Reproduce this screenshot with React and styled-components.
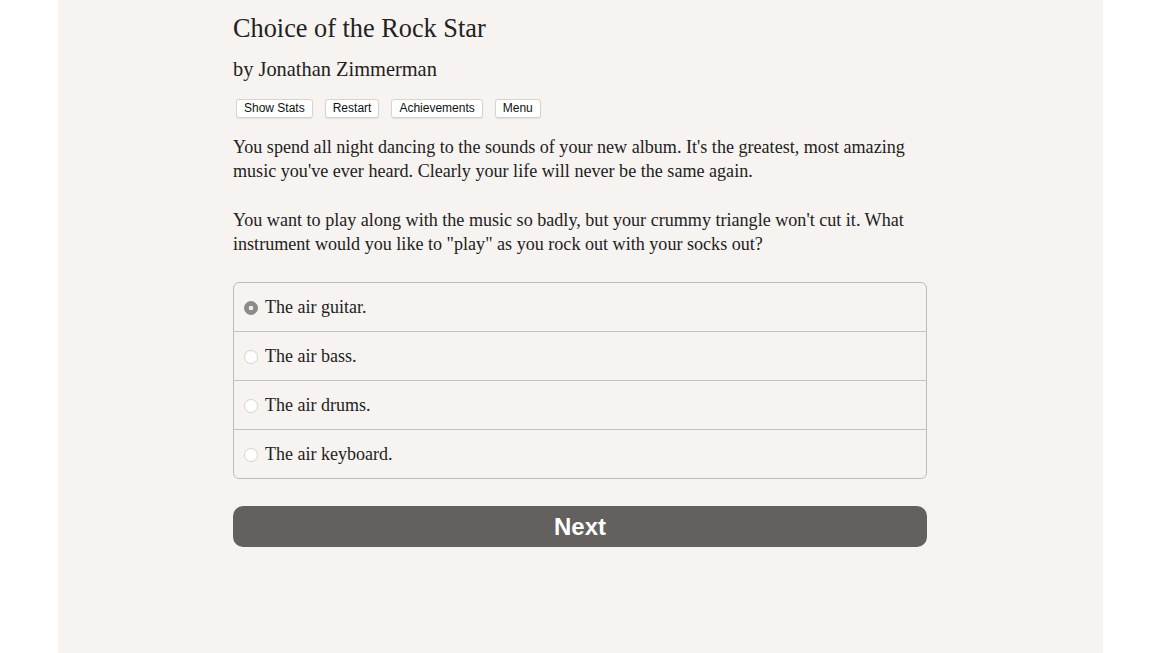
import React, { useState } from "react";
import styled, { createGlobalStyle } from "styled-components";

const GlobalStyle = createGlobalStyle`
  html, body {
    margin: 0;
    padding: 0;
    background: #ffffff;
  }
  #root {
    min-height: 100vh;
  }
`;

const choices = [
  "The air guitar.",
  "The air bass.",
  "The air drums.",
  "The air keyboard.",
];

const App = () => {
  const [selected, setSelected] = useState(0);

  return (
    <>
      <GlobalStyle />
      <Page>
        <Column>
          <Title>Choice of the Rock Star</Title>
          <Author>by Jonathan Zimmerman</Author>
          <Toolbar>
            <SmallButton>Show Stats</SmallButton>
            <SmallButton>Restart</SmallButton>
            <SmallButton>Achievements</SmallButton>
            <SmallButton>Menu</SmallButton>
          </Toolbar>
          <Text>
            You spend all night dancing to the sounds of your new album. It's the
            greatest, most amazing music you've ever heard. Clearly your life will
            never be the same again.
          </Text>
          <Text>
            You want to play along with the music so badly, but your crummy
            triangle won't cut it. What instrument would you like to "play" as you
            rock out with your socks out?
          </Text>
          <ChoiceList>
            {choices.map((c, i) => (
              <ChoiceRow key={c} onClick={() => setSelected(i)}>
                <Radio $checked={selected === i} />
                <span>{c}</span>
              </ChoiceRow>
            ))}
          </ChoiceList>
          <NextButton>Next</NextButton>
        </Column>
      </Page>
    </>
  );
};

export default App;

const Page = styled.div`
  width: 1045px;
  min-height: 100vh;
  margin: 0 auto;
  background: #f7f3f0;
  display: flex;
  justify-content: center;
  font-family: "Liberation Serif", "DejaVu Serif", serif;
  color: #222;
`;

const Column = styled.div`
  width: 694px;
  padding-top: 13px;
  display: flex;
  flex-direction: column;
`;

const Title = styled.h1`
  margin: 0;
  font-size: 26.3px;
  font-weight: normal;
  line-height: 32px;
`;

const Author = styled.h2`
  margin: 12px 0 0;
  font-size: 20.4px;
  font-weight: normal;
  line-height: 24px;
`;

const Toolbar = styled.div`
  display: flex;
  gap: 12px;
  margin: 18px 0 0 3px;
`;

const SmallButton = styled.button`
  font-family: "Liberation Sans", Arial, sans-serif;
  font-size: 12px;
  color: #111;
  background: #fff;
  border: 1px solid #d6d3d0;
  border-radius: 3px;
  height: 19px;
  padding: 0 7px;
  line-height: 17px;
  box-shadow: 0 1px 1px rgba(0, 0, 0, 0.08);
`;

const Text = styled.p`
  margin: 17px 0 8px;
  font-size: 18.1px;
  line-height: 24px;
`;

const ChoiceList = styled.div`
  margin-top: 18px;
  border: 1px solid #bdbab7;
  border-radius: 6px;
  overflow: hidden;
`;

const ChoiceRow = styled.label`
  display: flex;
  align-items: center;
  gap: 7px;
  height: 48px;
  padding: 0 0 0 10px;
  font-size: 18px;
  cursor: pointer;
  & + & {
    border-top: 1px solid #c4c1be;
  }
`;

const Radio = styled.span`
  width: 14px;
  height: 14px;
  border-radius: 50%;
  box-sizing: border-box;
  margin-top: 1px;
  border: 1px solid ${(p) => (p.$checked ? "#8a8785" : "#d4d1ce")};
  background: ${(p) =>
    p.$checked
      ? "radial-gradient(circle, #f0eeec 0 2px, #8d8a88 2.6px)"
      : "#fff"};
`;

const NextButton = styled.button`
  margin-top: 27px;
  height: 41px;
  border: none;
  border-radius: 10px;
  background: #63605d;
  color: #fff;
  font-family: "Liberation Sans", Arial, sans-serif;
  font-weight: bold;
  font-size: 24px;
`;
